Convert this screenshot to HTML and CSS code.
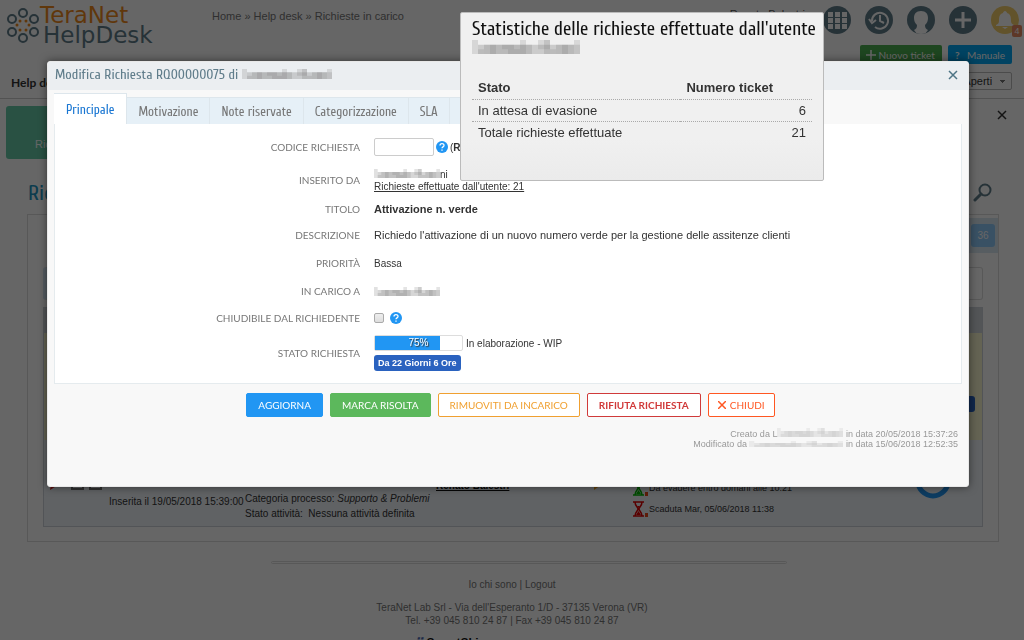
FILE: index.html
```html
<!DOCTYPE html>
<html lang="it">
<head>
  <meta charset="utf-8">
  <title>TeraNet HelpDesk</title>
  <link rel="stylesheet" href="styles.css">
</head>

<body>
  <svg class="defs" width="0" height="0">
    <symbol id="mosaic" viewBox="0 0 90 12" preserveAspectRatio="none">
      <path fill="#888" opacity=".25" d="M0 0h5v12H0zM10 4h40v8H10zM60 0h5v12h-5zM70 4h20v8H70z"/>
      <path fill="#777" opacity=".2" d="M5 8h5v4H5zM15 4h5v8h-5zM25 4h10v4H25zM30 8h10v4H30zM40 0h5v12h-5zM55 0h10v8H55zM65 8h5v4h-5zM75 4h5v8h-5zM85 0h5v12h-5z"/>
      <path fill="#777" opacity=".3" d="M5 4h80v8H5z"/>
    </symbol>
    <symbol id="help" viewBox="0 0 12 12">
      <circle cx="6" cy="6" r="6" fill="#2196f3"/>
      <path d="M4 4.600c0-2.700 4-2.600 4-.2C8 6 6 5.800 6 7.300M6 8.500v1.200" fill="none" stroke="#fff" stroke-width="1.300"/>
    </symbol>
    <symbol id="glass" viewBox="0 0 16 16">
      <path d="M0 1h11M0 15h11M2 1c0 4 3 5 3 7s-3 3-3 7M9 1c0 4-3 5-3 7s3 3 3 7" fill="none" stroke="currentColor" stroke-width="1.500"/>
      <path d="M3 14l2.500-4L8 14zM4 5h3L5.500 7z" fill="currentColor"/>
      <path d="M12 12h3v4h-3z" fill="#e64a19"/>
    </symbol>
  </svg>

  <div class="page">
    <header class="header">
      <svg class="logo" width="154" height="46" viewBox="0 0 154 46">
        <g fill="none" stroke="#607d8b" stroke-width="2">
          <circle cx="16" cy="7" r="4"/><circle cx="27" cy="13" r="4"/><circle cx="27" cy="26" r="4"/>
          <circle cx="16" cy="32" r="4"/><circle cx="5" cy="26" r="4"/><circle cx="5" cy="13" r="4"/>
        </g>
        <g fill="#ef8a1d">
          <circle cx="13" cy="15" r="1.500"/><circle cx="19" cy="15" r="1.500"/><circle cx="22" cy="19" r="1.500"/>
          <circle cx="19" cy="24" r="1.500"/><circle cx="13" cy="24" r="1.500"/><circle cx="10" cy="19" r="1.500"/>
        </g>
        <text x="33" y="17" class="logoTera">TeraNet</text>
        <text x="36" y="37" class="logoDesk">HelpDesk</text>
      </svg>
      <nav class="crumbs"><a href="#">Home</a> » <a href="#">Help desk</a> » <a href="#">Richieste in carico</a></nav>
      <div class="tools">
        <div class="toolRow">
          <span class="userName">Renato Balestri</span>
          <button class="round" aria-label="Applicazioni"><svg width="28" height="28" viewBox="0 0 28 28"><path fill="#fff" d="M5 6h5v5H5zM12 6h5v5h-5zM19 6h5v5h-5zM5 12h5v5H5zM12 12h5v5h-5zM19 12h5v5h-5zM5 18h5v5H5zM12 18h5v5h-5zM19 18h5v5h-5z"/></svg></button>
          <button class="round" aria-label="Cronologia"><svg width="28" height="28" viewBox="0 0 28 28"><path d="M7 15a8 8 0 1 1 3 6M4 13l3 4 4-3M15 9v6l4 2" fill="none" stroke="#fff" stroke-width="2"/></svg></button>
          <button class="round" aria-label="Profilo"><svg width="28" height="28" viewBox="0 0 28 28"><path fill="#fff" d="M14 5c-5 0-7 3-7 7 0 3 1 5 3 7 0 3-1 4-3 5l3 4h8l3-4c-2-1-3-2-3-5 2-2 3-4 3-7 0-4-2-7-7-7z"/></svg></button>
          <button class="round" aria-label="Aggiungi"><svg width="28" height="28" viewBox="0 0 28 28"><path d="M14 6v16M6 14h16" stroke="#fff" stroke-width="3"/></svg></button>
          <button class="round bell" aria-label="Notifiche"><svg width="28" height="28" viewBox="0 0 28 28"><path fill="#fff" d="M14 5c1 0 2 1 2 2 4 1 4 5 4 8 0 2 1 3 3 4v1H5v-1c2-1 3-2 3-4 0-3 0-7 4-8 0-1 1-2 2-2zM11 21h6l-3 2z"/></svg><span class="count">4</span></button>
        </div>
        <div class="toolRow buttons">
          <button class="small green"><svg width="10" height="10" viewBox="0 0 10 10"><path d="M5 0v10M0 5h10" stroke="#fff" stroke-width="1.500"/></svg> Nuovo ticket</button>
          <button class="small blue"><b>?</b> Manuale</button>
        </div>
      </div>
    </header>

    <div class="menu">
      <strong>Help desk</strong>
      <select class="filter" aria-label="Filtro"><option>Help desk Aperti</option></select>
    </div>

    <div class="cards">
      <a class="card" href="#">Richieste</a>
      <button class="plain closeCards" aria-label="Chiudi riepilogo"><svg width="10" height="10" viewBox="0 0 10 10"><path d="M1 1l8 8M9 1L1 9" stroke="#333" stroke-width="1.500"/></svg></button>
    </div>

    <div class="titleRow">
      <h1>Richieste in carico</h1>
      <button class="plain" aria-label="Cerca"><svg width="19" height="19" viewBox="0 0 19 19"><g fill="none" stroke="#607d8b"><circle cx="12" cy="7" r="5.500" stroke-width="2"/><path d="M8 11l-6 6" stroke-width="3" stroke-linecap="round"/></g></svg></button>
    </div>

    <div class="panel">
      <div class="strip"><span class="pages">36</span></div>
      <div class="search"></div>
      <div class="list">
        <div class="listHead"></div>
        <div class="listRow yellow"><span class="tag"></span></div>
        <div class="listRow">
          <div class="marks">
            <svg width="16" height="12" viewBox="0 0 16 12"><path d="M0 12l1-5h7z" fill="#d22"/></svg>
            <i class="mark"></i><i class="mark"></i>
          </div>
          <div class="inserted"><hr>Inserita il 19/05/2018 15:39:00</div>
          <div class="category">Categoria processo: <em>Supporto &amp; Problemi</em><br>Stato attività:&nbsp; Nessuna attività definita</div>
          <div class="assigned"><a href="#">Renato Balestri</a></div>
          <svg class="flag" width="8" height="10" viewBox="0 0 8 10"><path d="M0 0h7v5L0 10z" fill="#f5a623"/></svg>
          <div class="due">
            <p><svg class="ok" width="16" height="16"><use href="#glass"/></svg>Da evadere entro domani alle 10:21</p>
            <p><svg class="late" width="16" height="16"><use href="#glass"/></svg>Scaduta Mar, 05/06/2018 11:38</p>
          </div>
          <svg class="ring" width="36" height="36" viewBox="0 0 36 36"><circle cx="18" cy="18" r="15" fill="none" stroke="#2196f3" stroke-width="5"/></svg>
        </div>
      </div>
    </div>

    <footer class="footer">
      <hr>
      <p><a href="#">Io chi sono</a> | <a href="#">Logout</a></p>
      <address>TeraNet Lab Srl - Via dell'Esperanto 1/D - 37135 Verona (VR)<br>Tel. +39 045 810 24 87 | Fax +39 045 810 24 87</address>
      <p class="engine"><i>⠿</i> SmartSkin</p>
    </footer>
  </div>

  <div class="shade"></div>

  <div class="dialog" role="dialog" aria-labelledby="dialogTitle">
    <div class="dialogHead">
      <h2 id="dialogTitle">Modifica Richiesta RQ00000075 di <svg width="90" height="10"><use href="#mosaic"/></svg></h2>
      <button class="plain" aria-label="Chiudi finestra"><svg width="10" height="10" viewBox="0 0 10 10"><path d="M1 1l8 8M9 1L1 9" stroke="#4d7485" stroke-width="1.500"/></svg></button>
    </div>

    <div class="dialogBody">
      <div class="tabs" role="tablist">
        <button class="tab active" role="tab">Principale</button>
        <button class="tab" role="tab">Motivazione</button>
        <button class="tab" role="tab">Note riservate</button>
        <button class="tab" role="tab">Categorizzazione</button>
        <button class="tab" role="tab">SLA</button>
        <button class="tab" role="tab">Ticket collegati</button>
      </div>

      <form class="fields">
        <label for="codice">Codice richiesta</label>
        <div class="value tall"><input id="codice" class="code" type="text"><svg width="12" height="12"><use href="#help"/></svg><span>(<b>RQ00000075</b>)</span></div>
        <span class="label">Inserito da</span>
        <div class="value stack"><span class="who"><svg width="66" height="9"><use href="#mosaic"/></svg>ni</span><a href="#">Richieste effettuate dall'utente: 21</a></div>
        <span class="label">Titolo</span>
        <div class="value title"><b>Attivazione n. verde</b></div>
        <span class="label">Descrizione</span>
        <div class="value desc">Richiedo l'attivazione di un nuovo numero verde per la gestione delle assitenze clienti</div>
        <span class="label">Priorità</span>
        <div class="value">Bassa</div>
        <span class="label">In carico a</span>
        <div class="value"><svg width="66" height="9"><use href="#mosaic"/></svg></div>
        <label for="chiudibile">Chiudibile dal richiedente</label>
        <div class="value check"><input id="chiudibile" type="checkbox"><svg width="12" height="12"><use href="#help"/></svg></div>
        <span class="label">Stato richiesta</span>
        <div class="value stack status">
          <span class="progressRow"><span class="bar"><span class="fill" style="width: 75%"></span><span class="percent">75%</span></span>In elaborazione - WIP</span>
          <span class="age">Da 22 Giorni 6 Ore</span>
        </div>
      </form>

      <div class="actions">
        <button class="action update">Aggiorna</button>
        <button class="action solve">Marca risolta</button>
        <button class="action remove">Rimuoviti da incarico</button>
        <button class="action refuse">Rifiuta richiesta</button>
        <button class="action close"><svg width="8" height="8" viewBox="0 0 8 8"><path d="M0 0l8 8M8 0L0 8" stroke="currentColor" stroke-width="1.500"/></svg>Chiudi</button>
      </div>

      <div class="history">
        <div>Creato da L<svg width="66" height="9"><use href="#mosaic"/></svg> in data 20/05/2018 15:37:26</div>
        <div>Modificato da <svg width="94" height="6"><use href="#mosaic"/></svg> in data 15/06/2018 12:52:35</div>
      </div>
    </div>
  </div>

  <div class="popup">
    <h2>Statistiche delle richieste effettuate dall'utente</h2>
    <svg width="108" height="14"><use href="#mosaic"/></svg>
    <table>
      <thead>
        <tr><th>Stato</th><th>Numero ticket</th></tr>
      </thead>
      <tbody>
        <tr><td>In attesa di evasione</td><td class="num">6</td></tr>
        <tr><td>Totale richieste effettuate</td><td class="num">21</td></tr>
      </tbody>
    </table>
  </div>
</body>
</html>
```

FILE: styles.css
```css
* {box-sizing: border-box;}
body {margin: 0; overflow: hidden; font-family: "Liberation Sans", Arial, sans-serif; font-size: 10px; color: #333; background: #fff;}
h1, h2, p {margin: 0; font-weight: normal;}
h1, h2, .tab {font-family: Cuprum, "Roboto Condensed", "Open Sans Condensed", sans-serif; font-weight: 300;}
button {font-family: inherit; cursor: pointer;}
svg {flex: none;}
.defs {position: absolute;}
.plain {display: flex; padding: 0; border: none; background: none;}

/* page */
.page {height: 100vh; overflow: hidden;}
.header {display: flex; height: 67px; padding: 6px 5px 0 7px;}
.logo {overflow: visible;}
.logoTera, .logoDesk {font-family: "DejaVu Sans", sans-serif; font-size: 23px;}
.logoTera {fill: #ef8a1d;}
.logoDesk {fill: #607d8b;}
.crumbs {flex: 1; margin-left: 51px; padding-top: 4px; font-size: 11px; color: #777;}
.crumbs a {color: #777; text-decoration: none;}
.toolRow {display: flex; justify-content: flex-end; gap: 14px;}
.userName {margin-right: 4px; font-size: 11px; line-height: 16px; color: #555;}
.round {position: relative; width: 28px; height: 28px; padding: 0; border: none; border-radius: 50%; background: #607d8b; overflow: hidden;}
.bell {background: #f5cf6b; overflow: visible;}
.count {position: absolute; right: -3px; bottom: -3px; width: 10px; border-radius: 2px; background: #e88a63; color: #fff; font-size: 9px; line-height: 12px;}
.buttons {gap: 6px; margin-top: 11px; padding-right: 7px;}
.small {height: 19px; padding: 0 7px 0 6px; border: none; border-radius: 2px; color: #fff; font-family: Lato, sans-serif; font-size: 10px; white-space: nowrap;}
.small svg {vertical-align: -1px;}
.small b {margin: 0 5px 0 1px;}
.green {background: #4caf50;}
.blue {background: #03a9f4;}
.menu {display: flex; justify-content: space-between; align-items: center; height: 32px; padding: 0 12px 0 11px; border-bottom: 1px solid #ccc; font-family: Lato, sans-serif; font-size: 12px;}
.filter {appearance: none; width: 110px; height: 18px; margin-bottom: 3px; padding: 0 19px 0 9px; border: 1px solid #bbb; border-radius: 2px; background: #fff conic-gradient(from -45deg at 50% 100%, #777 90deg, transparent 0) no-repeat right 6px center / 6px 3px; color: #333; font-family: "Liberation Sans", sans-serif; font-size: 11px;}
.cards {display: flex; justify-content: space-between; align-items: flex-start; padding: 7px 17px 0 6px;}
.card {width: 140px; height: 53px; padding: 32px 0 0 29px; border-radius: 3px; background: #66cba9; color: #fff; font-size: 11px; text-decoration: none;}
.closeCards {margin-top: 4px;}
.titleRow {display: flex; justify-content: space-between; align-items: center; height: 55px; padding: 12px 32px 0 28px;}
.titleRow h1 {font-size: 22px; color: #2196c4;}
.panel {margin: 0 25px 0 27px; padding: 3px 0 14px 15px; border: 1px solid #ddd;}
.strip {width: 100px; height: 35px; margin-left: auto; padding: 6px 3px; background: #d9e8f3; text-align: right;}
.pages {display: inline-block; width: 24px; border-radius: 3px; background: #90caf9; color: #fff; font-size: 10px; line-height: 23px; text-align: center;}
.search {height: 33px; margin: 14px 15px 7px 0; border: 1px solid #ddd; border-left: 4px solid #d5e6f6; border-radius: 3px;}
.list {margin-right: 15px; border: 1px solid #cdd3da;}
.listHead {height: 25px; background: #cfd5da;}
.yellow.listRow {height: 107px; justify-content: flex-end; align-items: flex-end; background: #fbf7cf;}
.tag {width: 60px; height: 16px; margin: 0 7px 28px 0; border-radius: 3px; background: #2a62bf;}
.listRow {display: flex; align-items: flex-end; height: 86px; background: #eff4fa;}
.marks {display: flex; align-items: flex-end; gap: 5px; width: 65px; padding: 0 0 36px 6px;}
.mark {width: 13px; height: 12px; border: 2px solid #777;}
.inserted {width: 136px; padding-bottom: 18px; line-height: 12px; white-space: nowrap;}
.inserted hr {width: 70px; margin: 0 auto 9px; border: none; border-top: 1px solid #333;}
.category {width: 191px; padding-bottom: 5px; line-height: 15px; white-space: nowrap;}
.assigned {width: 158px; padding-bottom: 35px; font-weight: bold;}
.assigned a {color: #111;}
.flag {margin: 0 31px 36px 0;}
.due {flex: 1; padding-bottom: 7px; font-size: 9px;}
.due p {display: flex; align-items: center; height: 21px;}
.ok {color: #0b0;}
.late {color: #d00;}
.ring {margin: 0 31px 27px 0;}
.footer {padding-top: 19px; font-size: 10px; color: #777; text-align: center;}
.footer hr {height: 3px; margin: 0 237px 14px 271px; border: 1px solid #ddd; border-radius: 2px;}
.footer a {color: #777; text-decoration: none;}
.footer p {line-height: 13px;}
.footer address {margin: 10px 0; font-style: normal; line-height: 13px;}
.engine {padding-right: 124px; color: #111; font-size: 12px; font-weight: bold;}
.engine i {color: #4e6bb5;}
.shade {position: fixed; inset: 0; background: rgba(0, 0, 0, .6);}

/* edit dialog */
.dialog {position: absolute; top: 61px; left: 47px; right: 55px; border: 1px solid #e8e8e8; border-radius: 3px; background: #f8f8f8; box-shadow: 0 0 8px rgba(0, 0, 0, .5);}
.dialogHead {display: flex; justify-content: space-between; align-items: center; height: 28px; padding: 0 10px 3px 7px; background: #ebeef1;}
.dialogHead h2 {font-size: 14px; color: #607d8b;}
.dialogBody {padding: 3px 6px 37px 6px;}
.tabs {display: flex; align-items: flex-end;}
.tab {height: 27px; padding: 0 11px; border: 1px solid #dde6ec; border-left: none; border-bottom: none; background: #e6f0f7; color: #777; font-size: 13px; white-space: nowrap;}
.tab.active {height: 31px; padding: 0 12px; background: #fff; color: #1976d2;}
.fields {display: grid; grid-template-columns: 305px 1fr; column-gap: 14px; grid-template-rows: 32px 34px 24px 28px 28px 28px 26px 44px; align-items: center; padding: 7px 0 8px; border: 1px solid #e5ebee; border-top: none; background: #fff;}
.fields label, .fields .label {font-family: Lato, sans-serif; font-size: 10px; color: #777; text-align: right; text-transform: uppercase;}
.value {display: flex; align-items: center; font-size: 10px; white-space: nowrap;}
.value a {color: #333;}
.code {width: 60px; height: 18px; border: 1px solid #ccc; border-radius: 2px;}
.tall {gap: 2px;}
.stack {flex-direction: column; align-items: flex-start;}
.who {display: flex; line-height: 12px;}
.title, .desc {font-size: 11px;}
.check input {appearance: none; width: 10px; height: 10px; margin: 0 6px 0 0; border: 1px solid #aaa; border-radius: 2px; background: linear-gradient(#eee, #ddd);}
.status {gap: 4px;}
.progressRow {display: flex; align-items: center; gap: 3px;}
.bar {position: relative; width: 89px; height: 16px; border: 1px solid #ddd; border-radius: 2px;}
.fill {display: block; height: 100%; background: #2196f3;}
.percent {position: absolute; inset: 0; color: #fff; line-height: 14px; text-align: center; text-shadow: 1px 1px 1px #333;}
.age {padding: 0 4px; border-radius: 3px; background: #2a62bf; color: #fff; font-size: 9px; font-weight: bold; line-height: 16px;}
.actions {display: flex; justify-content: center; gap: 7px; padding: 9px 0 11px 5px;}
.action {height: 24px; padding: 0 11px; border: 1px solid; border-radius: 2px; background: #fff; font-family: Lato, sans-serif; font-size: 10px; text-transform: uppercase; white-space: nowrap;}
.update {border-color: #2196f3; background: #2196f3; color: #fff;}
.solve {border-color: #5cb85c; background: #5cb85c; color: #fff;}
.remove {color: #f0a030;}
.refuse {color: #d03a3a; font-weight: bold;}
.action.close {padding: 0 9px; color: #ff5722;}
.close svg {margin-right: 4px;}
.history {padding-right: 4px; font-size: 9px; line-height: 10px; color: #999; text-align: right;}
.history svg {opacity: .5;}

/* user statistics */
.popup {position: absolute; top: 12px; left: 460px; width: 364px; height: 169px; padding: 5px 11px; border: 1px solid #bbb; border-radius: 2px; background: linear-gradient(#f0f0f0 75%, #ebebeb);}
.popup h2 {font-size: 19px; line-height: 22px; color: #111; white-space: nowrap;}
.popup table {width: 100%; margin-top: 21px; border-collapse: collapse; font-size: 13px;}
.popup th, .popup td {height: 22px; padding: 0 6px; text-align: left;}
.popup thead tr, .popup tbody tr:first-child {border-bottom: 1px dotted #aaa;}
.popup .num {text-align: right;}
```
